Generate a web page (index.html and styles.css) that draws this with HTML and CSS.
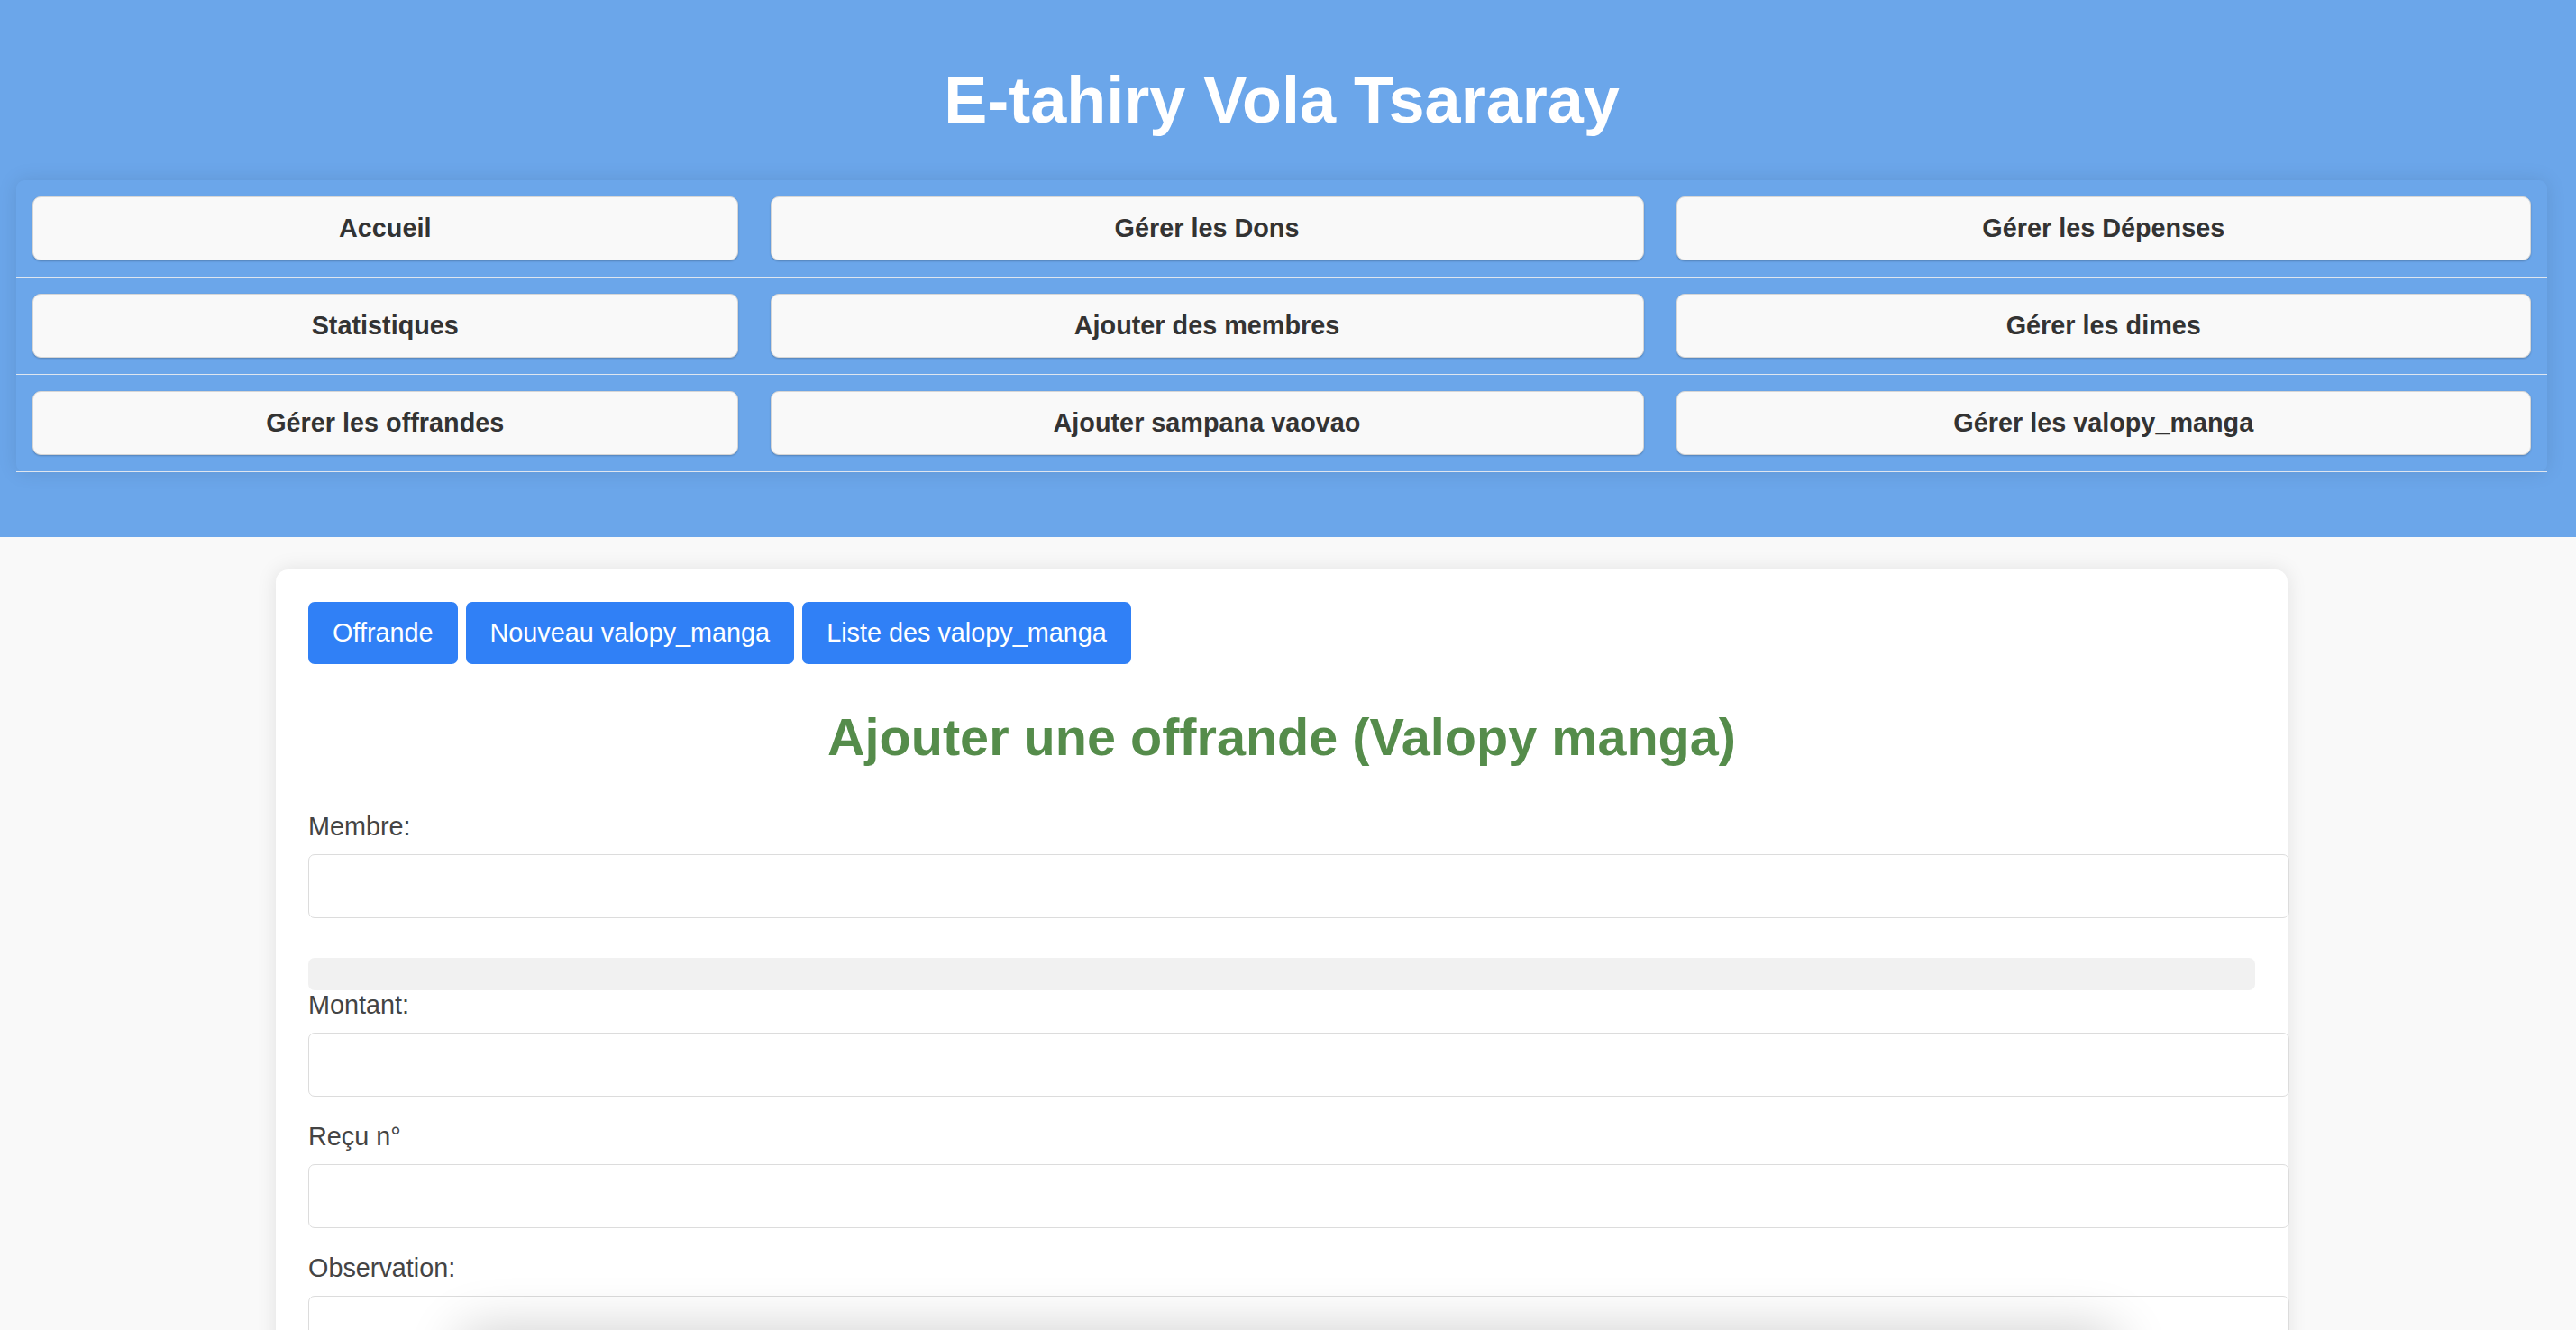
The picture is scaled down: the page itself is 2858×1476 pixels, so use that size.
FILE: index.html
```html
<!DOCTYPE html>
<html lang="fr">
<head>
<meta charset="utf-8">
<title>E-tahiry Vola Tsararay</title>
<link rel="stylesheet" href="styles.css">
</head>
<body>
<header class="site-header">
  <h1 class="site-title">E-tahiry Vola Tsararay</h1>
  <nav class="main-nav">
    <div class="nav-cell"><a class="nav-btn" href="#">Accueil</a></div>
    <div class="nav-cell"><a class="nav-btn" href="#">Gérer les Dons</a></div>
    <div class="nav-cell"><a class="nav-btn" href="#">Gérer les Dépenses</a></div>
    <div class="nav-cell"><a class="nav-btn" href="#">Statistiques</a></div>
    <div class="nav-cell"><a class="nav-btn" href="#">Ajouter des membres</a></div>
    <div class="nav-cell"><a class="nav-btn" href="#">Gérer les dimes</a></div>
    <div class="nav-cell"><a class="nav-btn" href="#">Gérer les offrandes</a></div>
    <div class="nav-cell"><a class="nav-btn" href="#">Ajouter sampana vaovao</a></div>
    <div class="nav-cell"><a class="nav-btn" href="#">Gérer les valopy_manga</a></div>
  </nav>
</header>
<main class="page-main">
  <section class="card">
    <div class="tabs">
      <a class="tab-btn" href="#">Offrande</a>
      <a class="tab-btn" href="#">Nouveau valopy_manga</a>
      <a class="tab-btn" href="#">Liste des valopy_manga</a>
    </div>
    <h2 class="form-title">Ajouter une offrande (Valopy manga)</h2>
    <form class="offer-form">
      <label class="field-label" for="membre">Membre:</label>
      <input class="field-input" id="membre" type="text">
      <div class="suggestions"></div>
      <label class="field-label" for="montant">Montant:</label>
      <input class="field-input" id="montant" type="text">
      <label class="field-label" for="recu">Reçu n°</label>
      <input class="field-input" id="recu" type="text">
      <label class="field-label" for="obs">Observation:</label>
      <input class="field-input" id="obs" type="text">
    </form>
  </section>
</main>
<div class="floating-shadow"></div>
</body>
</html>
```
FILE: styles.css
```css
html, body {
  margin: 0;
  padding: 0;
}
body {
  background: #f9f9f9;
  font-family: "Liberation Sans", Arial, sans-serif;
  color: #333;
}
.site-header {
  background: #6ba6ea;
  padding: 71px 14px 72px 0;
}
.site-title {
  margin: 0 0 48px;
  text-align: center;
  color: #fff;
  font-size: 72px;
  font-weight: bold;
  line-height: 81px;
}
.main-nav {
  margin: 0 18px;
  display: grid;
  grid-template-columns: 818.5fr 1005fr 984.5fr;
  background: #6ba6ea;
  border-radius: 9px;
  box-shadow: 0 0 22px rgba(0, 0, 0, 0.1);
}
.nav-cell {
  padding: 18px;
  border-bottom: 1px solid #dfe6ef;
}
.nav-btn {
  display: block;
  height: 33px;
  padding: 18px 0;
  line-height: 33px;
  text-align: center;
  background: #f9f9f9;
  color: #333;
  font-size: 28.8px;
  font-weight: bold;
  text-decoration: none;
  border: 1px solid #d6d6d6;
  border-radius: 9px;
  box-shadow: 0 1px 2px rgba(0, 0, 0, 0.22);
}
.page-main {
  padding: 36px 14px 0 0;
}
.card {
  width: 2160px;
  margin: 0 auto;
  padding: 36px;
  background: #fff;
  border-radius: 14px;
  box-shadow: 0 0 22px rgba(0, 0, 0, 0.1);
  min-height: 1000px;
}
.tabs {
  display: flex;
  gap: 9px;
}
.tab-btn {
  display: block;
  padding: 18px 27px;
  line-height: 33px;
  font-size: 28.8px;
  color: #fff;
  background: #3080f6;
  border-radius: 7px;
  text-decoration: none;
}
.form-title {
  margin: 48px 0 49.5px;
  text-align: center;
  color: #558c4b;
  font-size: 57.6px;
  font-weight: bold;
  line-height: 66.2px;
}
.offer-form {
  display: block;
}
.field-label {
  display: block;
  margin-bottom: 14.4px;
  font-size: 28.8px;
  line-height: 33px;
  color: #444;
}
.field-input {
  display: block;
  box-sizing: content-box;
  width: 100%;
  height: 33px;
  padding: 18px;
  margin: 0 0 27.5px;
  border: 1px solid #dcdcdc;
  border-radius: 7px;
  background: #fff;
  font-family: "Liberation Sans", Arial, sans-serif;
  font-size: 28.8px;
  outline: none;
}
.suggestions {
  height: 36px;
  margin-top: 44px;
  background: #f1f1f1;
  border-radius: 7px;
}
.floating-shadow {
  position: fixed;
  left: 510px;
  width: 1840px;
  top: 100%;
  height: 60px;
  border-radius: 20px;
  box-shadow: 0 0 60px rgba(0, 0, 0, 0.2);
}
```
